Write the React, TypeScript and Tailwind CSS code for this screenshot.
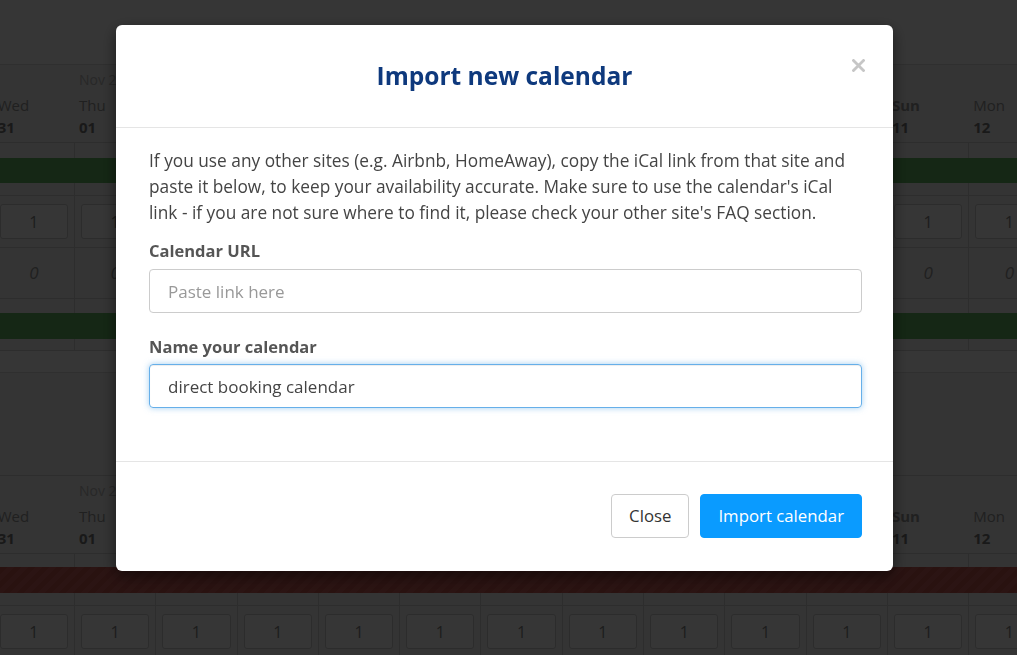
import React from "react";

interface Day {
  name: string;
  date: string;
  month?: string;
  weekend?: boolean;
}

const days: Day[] = [
  { name: "Wed", date: "31" },
  { name: "Thu", date: "01", month: "Nov 2018" },
  { name: "Fri", date: "02" },
  { name: "Sat", date: "03", weekend: true },
  { name: "Sun", date: "04", weekend: true },
  { name: "Mon", date: "05" },
  { name: "Tue", date: "06" },
  { name: "Wed", date: "07" },
  { name: "Thu", date: "08" },
  { name: "Fri", date: "09" },
  { name: "Sat", date: "10", weekend: true },
  { name: "Sun", date: "11", weekend: true },
  { name: "Mon", date: "12" },
];

const font = { fontFamily: '"Open Sans", "Noto Sans", sans-serif' };

const HeaderRow = () => (
  <div className="flex -ml-[6.3px] border-b border-[#d4d4d4]">
    {days.map((d, i) => (
      <div key={i} className="w-[81.3px] shrink-0 pl-[4px] pt-[4px] pb-[4px] text-[15px] leading-[22px]">
        <div className="h-[22px] text-[14px] text-[#bbb]">{d.month ?? ""}</div>
        <div className={`mt-[3px] text-[#999] ${d.weekend ? "font-bold text-[#777]" : ""}`}>{d.name}</div>
        <div className="font-bold text-[#777]">{d.date}</div>
      </div>
    ))}
  </div>
);

const LineRow = ({ h, bottom }: { h: string; bottom?: boolean }) => (
  <div className={`flex -ml-[6.3px] ${h} ${bottom ? "border-b border-[#d4d4d4]" : ""}`}>
    {days.map((_, i) => (
      <div key={i} className="w-[81.3px] shrink-0 border-r border-[#d4d4d4]" />
    ))}
  </div>
);

const BoxRow = () => (
  <div className="flex -ml-[6.3px] h-[52px] border-b border-[#d4d4d4]">
    {days.map((_, i) => (
      <div key={i} className="w-[81.3px] shrink-0 border-r border-[#d4d4d4] px-[6px] pt-[8px]">
        <div className="h-[35px] rounded-[3px] border border-[#d0d0d0] bg-white flex items-center justify-center text-[16px] text-[#888]">
          1
        </div>
      </div>
    ))}
  </div>
);

const ZeroRow = () => (
  <div className="flex -ml-[6.3px] h-[51px] border-b border-[#d4d4d4]">
    {days.map((_, i) => (
      <div key={i} className="w-[81.3px] shrink-0 border-r border-[#d4d4d4] flex items-center justify-center italic text-[17px] text-[#999]">
        0
      </div>
    ))}
  </div>
);

const CalendarBehind = () => (
  <div className="w-[1017px] h-[655px] overflow-hidden bg-[#f4f4f4]" style={font}>
    <div className="h-[65px] bg-white border-b border-[#dedede]" />
    <HeaderRow />
    <LineRow h="h-[15px]" />
    <div className="h-[25px] bg-[#62b862]" />
    <LineRow h="h-[13px]" bottom />
    <BoxRow />
    <ZeroRow />
    <LineRow h="h-[14px]" />
    <div className="h-[26px] bg-[#62b862]" />
    <LineRow h="h-[12px]" bottom />
    <div className="h-[22px] bg-white border-b border-[#dedede]" />
    <div className="h-[103px] border-b border-[#d4d4d4]" />
    <HeaderRow />
    <LineRow h="h-[13px]" />
    <div className="h-[26px] bg-[repeating-linear-gradient(135deg,#c2554f_0px,#c2554f_5px,#cb5f59_5px,#cb5f59_10px)]" />
    <LineRow h="h-[13px]" bottom />
    <BoxRow />
  </div>
);

export default function App() {
  return (
    <div className="relative w-[1017px] h-[655px] overflow-hidden">
      <CalendarBehind />
      <div className="fixed inset-0 bg-[rgba(0,0,0,0.79)]" />
      <div className="fixed inset-0 pt-[25px] pl-[116px]" style={font}>
        <div className="w-[777px] rounded-[6px] bg-white shadow-[0_5px_15px_rgba(0,0,0,0.5)]">
          <div className="relative h-[103px] border-b border-[#e5e5e5] flex items-center justify-center">
            <h4 className="text-[24.5px] font-bold text-[#0e397d]">Import new calendar</h4>
            <button className="absolute right-[28px] top-[34px] w-[13px] h-[13px]" aria-label="Close">
              <svg width="13" height="13" viewBox="0 0 13 13">
                <path d="M1.5 1.5 L11.5 11.5 M11.5 1.5 L1.5 11.5" stroke="#c6c6c6" strokeWidth="2.8" strokeLinecap="square" />
              </svg>
            </button>
          </div>
          <div className="pl-[33px] pr-[31px] pt-[20px] pb-[53px] text-[17px] leading-[26px] text-[#444]">
            <p className="text-[17.3px]">
              If you use any other sites (e.g. Airbnb, HomeAway), copy the iCal link from that site and
              <br />
              paste it below, to keep your availability accurate. Make sure to use the calendar's iCal
              <br />
              link - if you are not sure where to find it, please check your other site's FAQ section.
            </p>
            <label className="block mt-[12px] text-[16.5px] font-bold text-[#555]">Calendar URL</label>
            <input
              className="mt-[5px] block w-full h-[44px] rounded-[4px] border border-[#ccc] px-[18px] text-[17px] text-[#444] placeholder:text-[#999] outline-none"
              placeholder="Paste link here"
            />
            <label className="block mt-[21px] text-[16.5px] font-bold text-[#555]">Name your calendar</label>
            <input
              className="mt-[4px] block w-full h-[44px] rounded-[4px] border border-[#66afe9] px-[18px] text-[17px] text-[#444] outline-none shadow-[inset_0_1px_1px_rgba(0,0,0,0.075),0_0_6px_rgba(102,175,233,0.6)]"
              defaultValue="direct booking calendar"
            />
          </div>
          <div className="border-t border-[#e5e5e5] pl-[33px] pr-[31px] pt-[32px] pb-[33px] flex justify-end gap-[11px]">
            <button className="h-[44px] px-[17px] rounded-[4px] border border-[#ccc] bg-white text-[16.8px] text-[#333]">
              Close
            </button>
            <button className="h-[44px] px-[17px] rounded-[4px] border border-[#0a9bff] bg-[#0a9bff] text-[16.8px] text-white">
              Import calendar
            </button>
          </div>
        </div>
      </div>
    </div>
  );
}
